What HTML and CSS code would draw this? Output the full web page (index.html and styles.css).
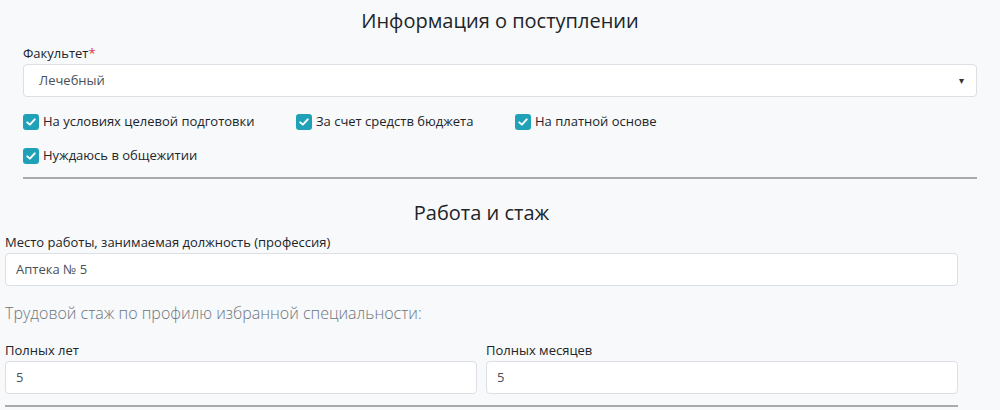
FILE: index.html
```html
<!DOCTYPE html>
<html>
<head>
  <meta charset="utf-8">
  <title>Анкета абитуриента</title>
  <link rel="stylesheet" href="styles.css">
</head>
<body>
  <section class="block block-admission">
    <h3 class="block-title">Информация о поступлении</h3>
    <label class="field-label">Факультет<span class="req">*</span></label>
    <div class="select-box">
      <span>Лечебный</span>
      <span class="caret">&#9662;</span>
    </div>
    <div class="checks">
      <label class="check check-1"><span class="box"><svg viewBox="0 0 16 16" width="12" height="12"><path d="M3 8.5 L6.5 11.5 L13 4.5" fill="none" stroke="#fff" stroke-width="2.6" stroke-linecap="round" stroke-linejoin="round"/></svg></span>На условиях целевой подготовки</label>
      <label class="check check-2"><span class="box"><svg viewBox="0 0 16 16" width="12" height="12"><path d="M3 8.5 L6.5 11.5 L13 4.5" fill="none" stroke="#fff" stroke-width="2.6" stroke-linecap="round" stroke-linejoin="round"/></svg></span>За счет средств бюджета</label>
      <label class="check check-3"><span class="box"><svg viewBox="0 0 16 16" width="12" height="12"><path d="M3 8.5 L6.5 11.5 L13 4.5" fill="none" stroke="#fff" stroke-width="2.6" stroke-linecap="round" stroke-linejoin="round"/></svg></span>На платной основе</label>
    </div>
    <div class="checks">
      <label class="check"><span class="box"><svg viewBox="0 0 16 16" width="12" height="12"><path d="M3 8.5 L6.5 11.5 L13 4.5" fill="none" stroke="#fff" stroke-width="2.6" stroke-linecap="round" stroke-linejoin="round"/></svg></span>Нуждаюсь в общежитии</label>
    </div>
    <hr>
  </section>

  <section class="block block-work">
    <h3 class="block-title">Работа и стаж</h3>
    <label class="field-label">Место работы, занимаемая должность (профессия)</label>
    <div class="text-box">Аптека № 5</div>
    <p class="lead">Трудовой стаж по профилю избранной специальности:</p>
    <div class="row">
      <div class="col">
        <label class="field-label">Полных лет</label>
        <div class="text-box">5</div>
      </div>
      <div class="col">
        <label class="field-label">Полных месяцев</label>
        <div class="text-box">5</div>
      </div>
    </div>
    <hr>
  </section>
</body>
</html>
```

FILE: styles.css
```css
body {
  margin: 0;
  background: #f8f9fa;
  font-family: 'Open Sans', sans-serif;
  font-size: 13px;
  color: #212529;
}
.block-admission {
  padding: 0 23px;
}
.block-work {
  padding: 0 42px 0 5px;
}
.block-title {
  margin: 0;
  text-align: center;
  font-weight: 400;
  font-size: 20px;
}
.block-admission .block-title {
  height: 42px;
  line-height: 42px;
}
.block-work .block-title {
  height: 37px;
  line-height: 36px;
  margin-top: 16px;
}
.field-label {
  display: block;
  height: 21px;
  line-height: 21px;
}
.block-admission .field-label {
  line-height: 22px;
}
.req {
  color: #dc3545;
}
.select-box, .text-box {
  box-sizing: border-box;
  height: 33px;
  background: #fff;
  border: 1px solid #dcdfe3;
  border-radius: 4px;
  padding: 0 12px;
  line-height: 31px;
  color: #495057;
}
.select-box {
  display: flex;
  justify-content: space-between;
  padding-left: 15px;
  margin-top: 1px;
}
.caret {
  font-size: 10px;
  color: #333;
  padding-right: 0;
}
.text-box {
  padding-left: 10px;
}
.checks {
  display: flex;
  margin-top: 14px;
  height: 21px;
}
.checks + .checks {
  margin-top: 13px;
}
.check {
  display: flex;
  align-items: center;
  gap: 4px;
  line-height: 21px;
}
.check-1 { width: 273px; }
.check-2 { width: 219px; }
.box {
  width: 16px;
  height: 16px;
  border-radius: 3px;
  background: #1fa2b8;
  display: flex;
  align-items: center;
  justify-content: center;
}
hr {
  border: 0;
  border-top: 2px solid #a9abad;
  margin: 0;
}
.block-admission hr {
  margin-top: 11px;
}
.lead {
  margin: 13px 0 0;
  height: 28px;
  line-height: 28px;
  font-size: 16px;
  font-weight: 300;
  color: #6c757d;
}
.row {
  display: flex;
  gap: 9px;
  margin-top: 13px;
}
.col {
  flex: 1;
}
.block-work hr {
  margin-top: 11px;
}
```
